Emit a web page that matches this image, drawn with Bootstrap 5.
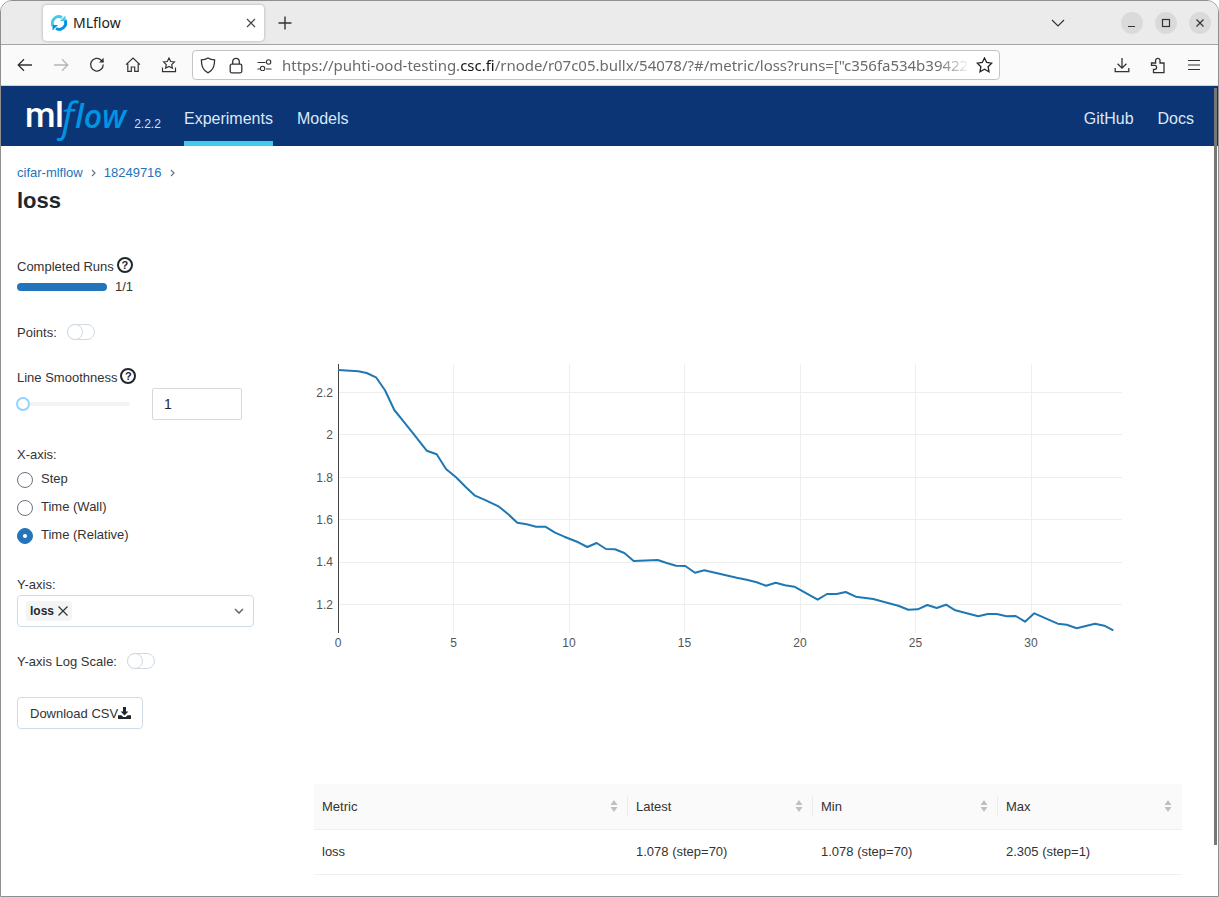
<!DOCTYPE html>
<html lang="en">
<head>
  <meta charset="UTF-8">
  <meta name="viewport" content="width=device-width, initial-scale=1.0">
  <title>MLflow</title>
  <link href="https://cdn.jsdelivr.net/npm/bootstrap@5.3.3/dist/css/bootstrap.min.css" rel="stylesheet">
  <style>
    html, body { height: 100%; overflow: hidden; background: #fff; }
    body { font-family: "Liberation Sans", Arial, sans-serif; font-size: 13px; line-height: 20px; color: #333; }
    .win { height: 897px; border: 1px solid #8f8f8f; border-radius: 12px 12px 0 0; overflow: hidden; position: relative; }
    .win-thumb { position: absolute; top: 87px; right: 1px; width: 3px; height: 757px; background: #777; }

    /* browser chrome */
    .tabbar { height: 44px; background: #ebebeb; border-bottom: 1px solid #a3a3a3; padding: 4px 7px 0 42px; font-family: "Noto Sans", sans-serif; }
    .tab-item { width: 221px; height: 36px; background: #fff; border-radius: 4px; box-shadow: 0 0 3px rgba(0,0,0,.3); padding: 0 8px; font-size: 14px; color: #222; }
    .tab-title { margin-left: 6px; }
    .tab-new { width: 42px; height: 36px; }
    .tab-chevron { margin: 14px 56px 0 0; }
    .winbtns { margin-top: 7px; column-gap: 12px; }
    .winbtn { width: 22px; height: 22px; border-radius: 50%; background: #dadada; }
    .toolbar { height: 41px; background: #fafafa; border-bottom: 1px solid #d4d4d4; padding: 0 6px; }
    .tool-btn { width: 36px; height: 40px; flex: none; }
    .urlbox { width: 808px; height: 30px; margin-left: 5px; background: #fff; border: 1px solid #c4c4c4; border-radius: 4px; padding: 0 1px; flex: none; }
    .url-ico { width: 28px; flex: none; }
    .urltext { flex: 1; min-width: 0; margin-left: 4px; white-space: nowrap; font-family: "Noto Sans", sans-serif; font-size: 15px; letter-spacing: -.02px; color: #6b6b6b; -webkit-mask-image: linear-gradient(to left, transparent 0, #000 32px); mask-image: linear-gradient(to left, transparent 0, #000 32px); }
    .urltext b { font-weight: 400; color: #15141a; }

    /* mlflow header */
    .mf-head { height: 60px; background: #0b3574; padding: 0 24px 0 24px; }
    .mf-logo { width: 159px; height: 60px; flex: none; color: #fff; white-space: nowrap; }
    .logo-ml { font-family: Roboto, sans-serif; font-weight: 500; font-size: 35px; line-height: 60px; letter-spacing: -.5px; }
    .logo-f { font-family: "Open Sans", sans-serif; font-style: italic; font-weight: 500; font-size: 40px; line-height: 60px; color: #0194e2; margin-left: -2px; }
    .logo-low { font-family: "Open Sans", sans-serif; font-style: italic; font-weight: 600; font-size: 32px; line-height: 60px; color: #0194e2; margin-left: 1px; }
    .logo-ver { font-size: 12px; color: #d5deea; margin: 16px 0 0 8px; }
    .mf-link { height: 60px; padding: 8px 0 0; font-size: 16px; line-height: 50px; color: #dbe8f7; border-bottom: 5px solid transparent; }
    .mf-link.active { color: #dbe8f7; border-bottom-color: #43c9ed; }
    .mf-link:hover { color: #fff; }

    /* left panel */
    .side { width: 313px; flex: none; padding: 17px 60px 0 16px; }
    .crumbs a { color: #2374bb; text-decoration: none; }
    .crumb-sep { width: 21px; display: flex; justify-content: center; }
    .mf-title { font-size: 22px; line-height: 20px; font-weight: 700; color: #1f272d; margin: 8px 0 0; }
    .ctl-row { height: 20px; }
    .help { width: 16px; height: 16px; border: 2px solid #1f272d; border-radius: 50%; margin: -4px 0 0 3px; font-size: 11px; line-height: 12px; font-weight: 700; text-align: center; color: #1f272d; }
    .runbar { width: 90px; height: 8px; border-radius: 4px; background: #2374bb; margin-right: 8px; }
    .sw-off { width: 28px; height: 16px; border: 1px solid #cfdbe6; border-radius: 8px; margin: -2px 0 0 10px; position: relative; background: #fff; }
    .sw-off::before { content: ""; position: absolute; left: -1px; top: -1px; width: 16px; height: 16px; border: 1px solid #cfdbe6; border-radius: 50%; background: #fff; }
    .slide-wrap { width: 113px; position: relative; }
    .slide-track { height: 4px; background: #f3f3f3; border-radius: 2px; }
    .slide-knob { position: absolute; left: -1px; top: -5px; width: 14px; height: 14px; border: 2px solid #91d5ff; border-radius: 50%; background: #fff; }
    .num-in { width: 90px; height: 32px; margin-left: 22px; padding: 4px 11px; font-size: 14px; border-color: #d9d9d9; border-radius: 2px; color: #1f272d; }
    .mf-radio { min-height: 20px; padding-left: 24px; margin: 0; }
    .mf-radio .form-check-input { width: 16px; height: 16px; margin-left: -24px; margin-top: 2px; border: 1px solid #6b7280; }
    .mf-radio .form-check-input:checked { background-color: #2374bb; border-color: #2374bb; --bs-form-check-bg-image: url("data:image/svg+xml,%3csvg xmlns='http://www.w3.org/2000/svg' viewBox='-4 -4 8 8'%3e%3ccircle r='1.2' fill='%23fff'/%3e%3c/svg%3e"); }
    .mf-radio .form-check-label { font-size: 13px; line-height: 18px; display: block; }
    .mf-select { height: 32px; border: 1px solid #cfdbe6; border-radius: 4px; padding: 0 9px 0 8px; }
    .mf-tag { height: 20px; padding: 0 4px; background: #f3f4f5; border-radius: 4px; font-weight: 700; font-size: 12px; color: #1f272d; }
    .mf-dl { height: 32px; width: 126px; padding: 0 0 0 12px; font-size: 13px; line-height: 32px; text-align: left; color: #333; background: #fff; border: 1px solid #cfdbe6; border-radius: 4px; }

    /* chart + table */
    .plot-col { width: 868px; flex: none; }
    .plot-svg { display: block; margin-top: 204px; }
    .plot-svg text { font-family: "Liberation Sans", Arial, sans-serif; font-size: 12px; fill: #555; }
    .mf-table { width: 868px; table-layout: fixed; margin: 134px 0 0; font-size: 13px; --bs-table-color: #333; --bs-table-border-color: #f0f0f0; }
    .mf-table th { height: 45px; padding: 1px 8px 0; font-weight: 400; background: #fafafa; position: relative; vertical-align: middle; border-top: 0; border-radius: 2px 2px 0 0; }
    .mf-table td { height: 45px; padding: 0 8px; vertical-align: middle; }
    .sort-ico { position: absolute; right: 10px; top: 15px; }
    .th-sep { position: absolute; right: 0; top: 12px; width: 1px; height: 21px; background: #ececec; }
  </style>
</head>
<body>

<div class="win">

  <!-- Browser tabs -->
  <div class="tabbar d-flex align-items-start">
    <div class="tab-item d-flex align-items-center">
      <svg width="16" height="16" viewBox="0 0 16 16" fill="none" stroke-width="3">
        <path d="M2 11A6.5 6.5 0 0 1 11 2.500" stroke="#43c9ed"/>
        <path d="M14 5A6.5 6.5 0 0 1 5 13.500" stroke="#0194e2"/>
        <path d="M14.500 0.500V6H9Z" fill="#43c9ed"/>
        <path d="M1.500 15.500V10H7Z" fill="#0194e2"/>
      </svg>
      <span class="tab-title flex-grow-1">MLflow</span>
      <svg width="10" height="10" viewBox="0 0 10 10" stroke="#444" stroke-width="1.1"><path d="M1 1L9 9M9 1L1 9"/></svg>
    </div>
    <div class="tab-new d-flex justify-content-center align-items-center">
      <svg width="14" height="14" viewBox="0 0 14 14" stroke="#333" stroke-width="1.4"><path d="M7 0.5V13.5M0.5 7H13.5"/></svg>
    </div>
    <svg class="tab-chevron ms-auto" width="14" height="8" viewBox="0 0 14 8" fill="none" stroke="#333" stroke-width="1.2"><path d="M1 1L7 7L13 1"/></svg>
    <div class="winbtns d-flex">
      <div class="winbtn d-flex justify-content-center align-items-center"><svg width="10" height="10" viewBox="0 0 10 10" stroke="#333" stroke-width="1.2"><path d="M1 8.5H8"/></svg></div>
      <div class="winbtn d-flex justify-content-center align-items-center"><svg width="10" height="10" viewBox="0 0 10 10" fill="none" stroke="#333" stroke-width="1.2"><rect x="1.5" y="1.5" width="7" height="7"/></svg></div>
      <div class="winbtn d-flex justify-content-center align-items-center"><svg width="10" height="10" viewBox="0 0 10 10" stroke="#333" stroke-width="1.2"><path d="M1.5 1.5L8.5 8.5M8.5 1.5L1.5 8.5"/></svg></div>
    </div>
  </div>

  <!-- Browser toolbar -->
  <div class="toolbar d-flex align-items-center">
    <div class="tool-btn d-flex justify-content-center align-items-center">
      <svg width="16" height="14" viewBox="0 0 16 14" fill="none" stroke="#333" stroke-width="1.3"><path d="M15 7H1.5M7 1.2L1.2 7L7 12.8"/></svg>
    </div>
    <div class="tool-btn d-flex justify-content-center align-items-center">
      <svg width="16" height="14" viewBox="0 0 16 14" fill="none" stroke="#b5b5b5" stroke-width="1.3"><path d="M1 7H14.5M9 1.2L14.8 7L9 12.8"/></svg>
    </div>
    <div class="tool-btn d-flex justify-content-center align-items-center">
      <svg width="16" height="16" viewBox="0 0 16 16" fill="none" stroke="#333" stroke-width="1.3"><path d="M14.2 7.5A6.3 6.3 0 1 1 12.3 3.2L14.4 5"/><path d="M14.6 0.8V5.4H10" fill="#333" stroke="none"/></svg>
    </div>
    <div class="tool-btn d-flex justify-content-center align-items-center">
      <svg width="16" height="16" viewBox="0 0 16 16" fill="none" stroke="#333" stroke-width="1.2"><path d="M1 7.6L8 1L15 7.6M2.8 6.4V14.4H6.3V10H9.7V14.4H13.2V6.4"/></svg>
    </div>
    <div class="tool-btn d-flex justify-content-center align-items-center">
      <svg width="16" height="16" viewBox="0 0 16 16" fill="none" stroke="#333" stroke-width="1.2"><path d="M8 1L9.7 4.5L13.4 5L10.7 7.6L11.4 11.2L8 9.5L4.6 11.2L5.3 7.6L2.6 5L6.3 4.5Z"/><path d="M1.5 10.5V14.6H14.5V10.5"/></svg>
    </div>
    <div class="urlbox d-flex align-items-center">
      <div class="url-ico d-flex justify-content-center">
        <svg width="16" height="17" viewBox="0 0 16 17" fill="none" stroke="#333" stroke-width="1.3"><path d="M8 1C10 2.4 12.4 2.8 14.6 2.8C14.8 8.5 13.2 13.4 8 15.8C2.8 13.4 1.2 8.5 1.4 2.8C3.6 2.8 6 2.4 8 1Z"/></svg>
      </div>
      <div class="url-ico d-flex justify-content-center">
        <svg width="14" height="17" viewBox="0 0 14 17" fill="none" stroke="#333" stroke-width="1.3"><rect x="1.2" y="7.2" width="11.6" height="8.6" rx="1.5"/><path d="M3.7 7V4.6A3.3 3.3 0 0 1 10.3 4.6V7"/></svg>
      </div>
      <div class="url-ico d-flex justify-content-center">
        <svg width="15" height="12" viewBox="0 0 15 12" fill="none" stroke="#333" stroke-width="1.1"><path d="M0.5 3.5H8.5M0.5 10H3M9 10H14.5"/><circle cx="11.6" cy="3" r="2.2"/><circle cx="5.6" cy="9.5" r="2.2"/></svg>
      </div>
      <div class="urltext">https://puhti-ood-testing.<b>csc.fi</b>/rnode/r07c05.bullx/54078/?#/metric/loss?runs=["c356fa534b39422</div>
      <div class="url-ico d-flex justify-content-center">
        <svg width="17" height="16" viewBox="0 0 17 16" fill="none" stroke="#222" stroke-width="1.3"><path d="M8.5 1L10.7 5.5L15.7 6.2L12.1 9.7L13 14.7L8.5 12.3L4 14.7L4.9 9.7L1.3 6.2L6.3 5.5Z"/></svg>
      </div>
    </div>
    <div class="tool-btn d-flex justify-content-center align-items-center ms-auto">
      <svg width="16" height="16" viewBox="0 0 16 16" fill="none" stroke="#333" stroke-width="1.3"><path d="M8 1V11M3.6 6.8L8 11.2L12.4 6.8M1.2 11V14.6H14.8V11"/></svg>
    </div>
    <div class="tool-btn d-flex justify-content-center align-items-center">
      <svg width="16" height="17" viewBox="0 0 16 17" fill="none" stroke="#333" stroke-width="1.3"><path d="M1.5 6H5.6V4A2.2 2.2 0 0 1 10 3.2V6H14V15.6H3.5V12.4H5.2A2.1 2.1 0 0 0 5.2 8.4H1.5Z"/></svg>
    </div>
    <div class="tool-btn d-flex justify-content-center align-items-center">
      <svg width="14" height="12" viewBox="0 0 14 12" stroke="#333" stroke-width="1.2"><path d="M1 1.5H13M1 6H13M1 10.5H13"/></svg>
    </div>
  </div>

  <!-- MLflow header -->
  <nav class="mf-head d-flex align-items-center">
    <a class="mf-logo text-decoration-none d-flex align-items-center" href="#">
      <span class="logo-ml">ml</span><span class="logo-f">f</span><span class="logo-low">low</span><span class="logo-ver">2.2.2</span>
    </a>
    <ul class="nav gap-4 flex-grow-1">
      <li class="nav-item"><a class="nav-link mf-link active" href="#">Experiments</a></li>
      <li class="nav-item"><a class="nav-link mf-link" href="#">Models</a></li>
      <li class="nav-item ms-auto"><a class="nav-link mf-link" href="#">GitHub</a></li>
      <li class="nav-item"><a class="nav-link mf-link" href="#">Docs</a></li>
    </ul>
  </nav>

  <div class="d-flex">
    <!-- Controls -->
    <div class="side">
      <div class="crumbs d-flex align-items-center">
        <a href="#">cifar-mlflow</a>
        <span class="crumb-sep"><svg width="5" height="8" viewBox="0 0 5 8" fill="none" stroke="#6b7280" stroke-width="1.2"><path d="M1 1L4 4L1 7"/></svg></span>
        <a href="#">18249716</a>
        <span class="crumb-sep"><svg width="5" height="8" viewBox="0 0 5 8" fill="none" stroke="#6b7280" stroke-width="1.2"><path d="M1 1L4 4L1 7"/></svg></span>
      </div>
      <h1 class="mf-title">loss</h1>

      <div class="ctl-row d-flex align-items-center" style="margin-top:46px">Completed Runs <span class="help">?</span></div>
      <div class="ctl-row d-flex align-items-center"><div class="runbar"></div>1/1</div>

      <div class="ctl-row d-flex align-items-center" style="margin-top:26px">Points: <span class="sw-off"></span></div>

      <div class="ctl-row d-flex align-items-center" style="margin-top:25px">Line Smoothness <span class="help">?</span></div>
      <div class="d-flex align-items-center">
        <div class="slide-wrap"><div class="slide-track"></div><div class="slide-knob"></div></div>
        <input class="form-control num-in" type="text" value="1">
      </div>

      <div class="ctl-row" style="margin-top:25px">X-axis:</div>
      <div class="form-check mf-radio" style="margin-top:5px">
        <input class="form-check-input" type="radio" name="xaxis" id="xStep">
        <label class="form-check-label" for="xStep">Step</label>
      </div>
      <div class="form-check mf-radio" style="margin-top:8px">
        <input class="form-check-input" type="radio" name="xaxis" id="xWall">
        <label class="form-check-label" for="xWall">Time (Wall)</label>
      </div>
      <div class="form-check mf-radio" style="margin-top:8px">
        <input class="form-check-input" type="radio" name="xaxis" id="xRel" checked>
        <label class="form-check-label" for="xRel">Time (Relative)</label>
      </div>

      <div class="ctl-row" style="margin-top:29px">Y-axis:</div>
      <div class="mf-select d-flex align-items-center justify-content-between">
        <span class="mf-tag d-flex align-items-center gap-1">loss
          <svg width="10" height="10" viewBox="0 0 10 10" stroke="#333" stroke-width="1.2"><path d="M0.500 0.500L9.500 9.500M9.500 0.500L0.500 9.500"/></svg>
        </span>
        <svg width="10" height="6" viewBox="0 0 10 6" fill="none" stroke="#5f6b76" stroke-width="1.6"><path d="M1 1L5 5L9 1"/></svg>
      </div>

      <div class="ctl-row d-flex align-items-center" style="margin-top:25px">Y-axis Log Scale: <span class="sw-off"></span></div>

      <button class="btn mf-dl d-block" style="margin-top:25px">Download CSV<svg width="13" height="12" viewBox="0 0 13 12" fill="#1f272d" style="vertical-align:-1px"><path d="M5 0H8V4.5H10.4L6.5 8.4L2.6 4.5H5Z"/><path d="M0 8.2H3.4L5.2 10H7.8L9.6 8.2H13V12H0Z"/></svg></button>
    </div>

    <!-- Chart and table -->
    <div class="plot-col">
      <svg class="plot-svg" width="868" height="300" viewBox="314 350 868 300">
        <g stroke="#eeeeee" stroke-width="1">
          <path d="M338 392.500H1122M338 434.500H1122M338 477.500H1122M338 519.500H1122M338 562.500H1122M338 604.500H1122"/>
          <path d="M453.500 364V633M569.500 364V633M684.500 364V633M800.500 364V633M915.500 364V633M1031.500 364V633"/>
        </g>
        <path d="M338.500 364V633" stroke="#444" stroke-width="1"/>
        <polyline id="lossLine" fill="none" stroke="#1f77b4" stroke-width="2" stroke-linejoin="round" points=""/>
        <g text-anchor="end">
          <text x="333" y="397">2.2</text>
          <text x="333" y="439">2</text>
          <text x="333" y="482">1.8</text>
          <text x="333" y="524">1.6</text>
          <text x="333" y="566">1.4</text>
          <text x="333" y="609">1.2</text>
        </g>
        <g text-anchor="middle">
          <text x="338" y="647">0</text>
          <text x="453.500" y="647">5</text>
          <text x="569" y="647">10</text>
          <text x="684.500" y="647">15</text>
          <text x="800" y="647">20</text>
          <text x="915.500" y="647">25</text>
          <text x="1031" y="647">30</text>
        </g>
      </svg>

      <table class="table mf-table">
        <colgroup><col style="width:314px"><col style="width:185px"><col style="width:185px"><col style="width:184px"></colgroup>
        <thead>
          <tr>
            <th>Metric<svg class="sort-ico" width="8" height="14" viewBox="0 0 8 14" fill="#bfbfbf"><path d="M4 1L7.500 6H0.500Z"/><path d="M0.500 8H7.500L4 13Z"/></svg><span class="th-sep"></span></th>
            <th>Latest<svg class="sort-ico" width="8" height="14" viewBox="0 0 8 14" fill="#bfbfbf"><path d="M4 1L7.500 6H0.500Z"/><path d="M0.500 8H7.500L4 13Z"/></svg><span class="th-sep"></span></th>
            <th>Min<svg class="sort-ico" width="8" height="14" viewBox="0 0 8 14" fill="#bfbfbf"><path d="M4 1L7.500 6H0.500Z"/><path d="M0.500 8H7.500L4 13Z"/></svg><span class="th-sep"></span></th>
            <th>Max<svg class="sort-ico" width="8" height="14" viewBox="0 0 8 14" fill="#bfbfbf"><path d="M4 1L7.500 6H0.500Z"/><path d="M0.500 8H7.500L4 13Z"/></svg></th>
          </tr>
        </thead>
        <tbody>
          <tr>
            <td>loss</td>
            <td>1.078 (step=70)</td>
            <td>1.078 (step=70)</td>
            <td>2.305 (step=1)</td>
          </tr>
        </tbody>
      </table>
    </div>
  </div>

  <div class="win-thumb"></div>
</div>

<script>
  // loss curve, traced in page pixels
  const linePts = [
    [338.3,370],[358.3,371.3],[366.7,373],[376,377.3],[385,390.3],[394.3,410],[403.7,421.7],[413.3,433.7],
    [426.7,450.7],[436.7,454.3],[446,469],[456,477.3],[465.7,487],[475,495.7],[484.3,499.7],[499,506.7],
    [508.3,514.3],[517.3,522.7],[526.7,524.3],[536,526.7],[545.3,526.7],[555,532.7],[564.3,536.7],[578.3,542.3],
    [587.3,547],[596.7,543],[606,549],[615,549.3],[624.3,553],[633.7,561],[657.7,560],[666.7,563],
    [676,565.7],[685.3,566],[695,572.7],[704.3,570.3],[736.7,577.7],[746.7,579.7],[756.7,582.3],[766,585.7],
    [775.7,582.7],[785,585.3],[794.3,586.7],[817.7,599.7],[827,594],[836.7,594],[845.7,592],[855.7,596.7],
    [873.3,599],[883.3,601.7],[898.3,605.7],[908.3,609.7],[917.7,609.3],[927.3,605],[936.7,608],[946,604.7],
    [955.3,610.3],[978.3,616.3],[987.7,614],[996.7,614],[1006.7,616.3],[1015.7,616],[1025,621.7],[1034.3,613.3],
    [1057.7,623.7],[1066.7,624.7],[1076.7,628.3],[1095,623.7],[1104.3,625.7],[1113.3,630.3]
  ];
  document.getElementById('lossLine').setAttribute('points', linePts.map(p => p.join(',')).join(' '));
</script>
<script src="https://cdn.jsdelivr.net/npm/bootstrap@5.3.3/dist/js/bootstrap.bundle.min.js"></script>
</body>
</html>
